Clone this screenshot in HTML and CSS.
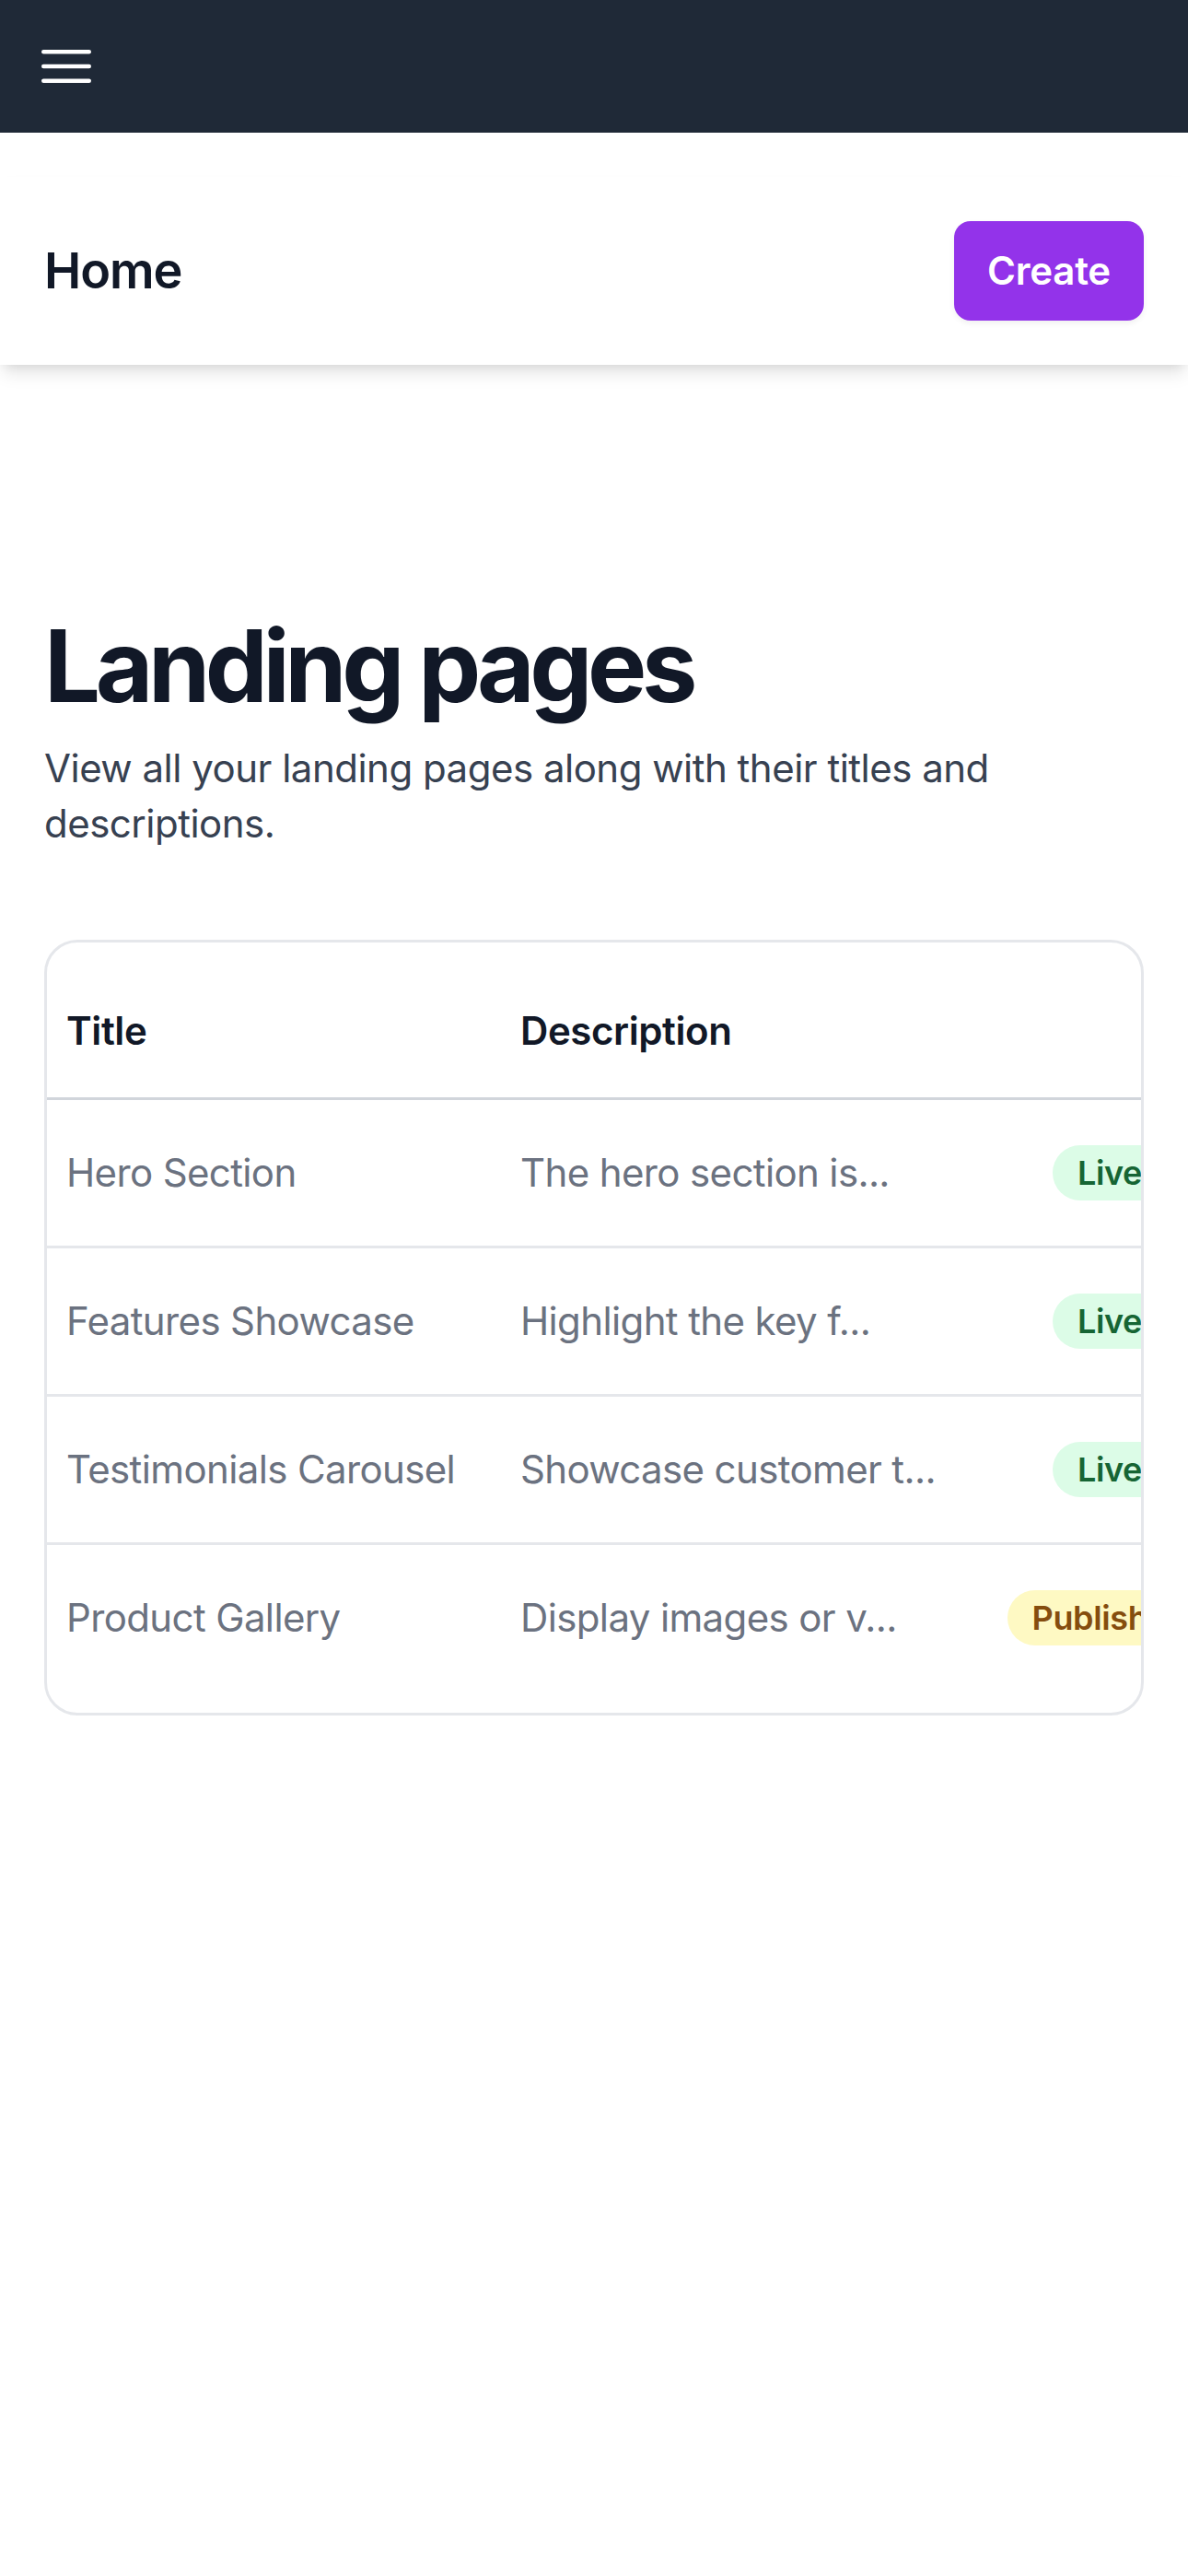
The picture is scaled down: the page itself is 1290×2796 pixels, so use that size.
FILE: index.html
```html
<!DOCTYPE html>
<html lang="en">
<head>
<meta charset="utf-8">
<title>Landing pages</title>
<link rel="stylesheet" href="styles.css">
</head>
<body>
<nav class="topbar">
  <button class="menu-btn" aria-label="Open menu">
    <svg class="menu-icon" viewBox="0 0 24 24" fill="none" stroke="currentColor" stroke-width="1.5" stroke-linecap="round" stroke-linejoin="round">
      <path d="M3.75 6.75h16.5M3.75 12h16.5m-16.5 5.25h16.5"/>
    </svg>
  </button>
</nav>
<header class="page-header">
  <h1 class="header-title">Home</h1>
  <button class="create-btn">Create</button>
</header>
<main class="content">
  <h2 class="page-title">Landing pages</h2>
  <p class="page-desc">View all your landing pages along with their titles and descriptions.</p>
  <div class="table-card">
    <table class="pages-table">
      <thead>
        <tr>
          <th class="col-title">Title</th>
          <th class="col-desc">Description</th>
          <th class="col-status"></th>
        </tr>
      </thead>
      <tbody>
        <tr>
          <td class="col-title">Hero Section</td>
          <td class="col-desc">The hero section is...</td>
          <td class="col-status"><span class="badge badge-live">Live</span></td>
        </tr>
        <tr>
          <td class="col-title">Features Showcase</td>
          <td class="col-desc">Highlight the key f...</td>
          <td class="col-status"><span class="badge badge-live">Live</span></td>
        </tr>
        <tr>
          <td class="col-title">Testimonials Carousel</td>
          <td class="col-desc">Showcase customer t...</td>
          <td class="col-status"><span class="badge badge-live">Live</span></td>
        </tr>
        <tr>
          <td class="col-title">Product Gallery</td>
          <td class="col-desc">Display images or v...</td>
          <td class="col-status"><span class="badge badge-published">Published</span></td>
        </tr>
      </tbody>
    </table>
  </div>
</main>
</body>
</html>
```

FILE: styles.css
```css
* {
  box-sizing: border-box;
}

html, body {
  margin: 0;
  padding: 0;
  background: #ffffff;
}

body {
  font-family: "Inter", "Noto Sans", sans-serif;
  color: #111827;
  min-height: 2796px;
}

.topbar {
  height: 144px;
  background: #1f2937;
  display: flex;
  align-items: center;
  padding-left: 36px;
}

.menu-btn {
  width: 72px;
  height: 72px;
  padding: 0;
  margin: 0;
  border: none;
  background: transparent;
  color: #ffffff;
  display: flex;
}

.menu-icon {
  width: 72px;
  height: 72px;
}

.page-header {
  margin-top: 48px;
  padding: 48px;
  display: flex;
  align-items: center;
  justify-content: space-between;
  background: #ffffff;
  box-shadow: 0 12px 18px -3px rgba(0, 0, 0, 0.1), 0 6px 12px -6px rgba(0, 0, 0, 0.1);
  position: relative;
}

.header-title {
  margin: 0;
  font-size: 54px;
  line-height: 84px;
  font-weight: 600;
  letter-spacing: -0.02em;
  color: #111827;
}

.create-btn {
  font-family: inherit;
  font-size: 42px;
  line-height: 60px;
  font-weight: 600;
  letter-spacing: -0.005em;
  color: #ffffff;
  background: #9333ea;
  border: none;
  border-radius: 18px;
  padding: 24px 36px;
  box-shadow: 0 3px 6px rgba(0, 0, 0, 0.06);
}

.content {
  padding: 0 48px;
}

.page-title {
  margin: 267px 0 0;
  font-size: 108px;
  line-height: 120px;
  font-weight: 700;
  letter-spacing: -0.05em;
  color: #111827;
}

.page-desc {
  margin: 21px 0 0;
  font-size: 42px;
  line-height: 60px;
  letter-spacing: -0.012em;
  color: #374151;
}

.table-card {
  margin-top: 96px;
  border: 3px solid #e5e7eb;
  border-radius: 36px;
  overflow: hidden;
  padding: 24px 0;
}

.pages-table {
  border-collapse: separate;
  border-spacing: 0;
  table-layout: fixed;
  width: 1306px;
}

.pages-table th {
  text-align: left;
  font-size: 42px;
  line-height: 60px;
  font-weight: 600;
  letter-spacing: -0.01em;
  color: #111827;
  padding-top: 42px;
  padding-bottom: 42px;
  border-bottom: 3px solid #d1d5db;
}

.pages-table td {
  font-size: 42px;
  line-height: 60px;
  letter-spacing: -0.015em;
  color: #6b7280;
  padding-top: 49px;
  padding-bottom: 49px;
  white-space: nowrap;
}

.pages-table tbody tr + tr td {
  border-top: 3px solid #e5e7eb;
}

.col-title {
  width: 478px;
  padding-left: 21px;
  padding-right: 12px;
}

.col-desc {
  width: 524px;
  padding-left: 36px;
  padding-right: 36px;
}

.pages-table .col-status {
  width: 304px;
  padding-left: 36px;
  padding-right: 36px;
  text-align: center;
}

.badge {
  display: inline-block;
  vertical-align: top;
  border-radius: 9999px;
  padding: 0 27px;
  font-size: 36px;
  line-height: 60px;
  font-weight: 600;
  letter-spacing: -0.01em;
}

.badge-live {
  background: #dcfce7;
  color: #166534;
}

.badge-published {
  background: #fef9c3;
  color: #854d0e;
}
```
